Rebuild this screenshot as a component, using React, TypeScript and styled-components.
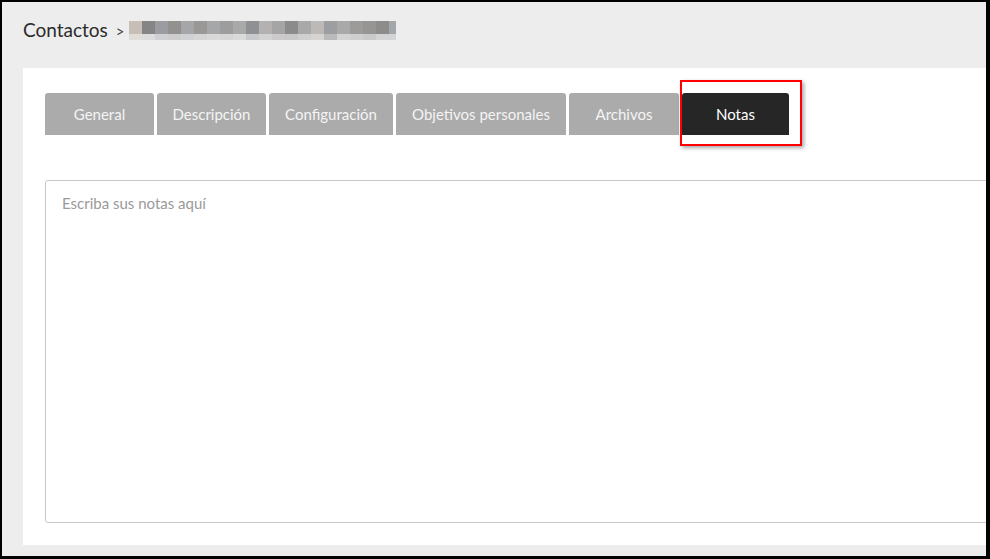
import React from 'react';
import styled, { createGlobalStyle } from "styled-components";

const GlobalStyle = createGlobalStyle`
  html, body {
    margin: 0;
    padding: 0;
    background: #ededed;
    font-family: Lato, "Open Sans", Arial, sans-serif;
  }
`;

const Frame = styled.div`
  box-sizing: border-box;
  width: 990px;
  height: 559px;
  border-style: solid;
  border-color: #000;
  border-width: 2px 4px 3px 2px;
  background: #ededed;
  overflow: hidden;
  display: flex;
  flex-direction: column;
`;

const Header = styled.div`
  height: 66px;
  display: flex;
  align-items: center;
  padding: 0 0 12px 21px;
  box-sizing: border-box;
`;

const Crumb = styled.span`
  font-size: 19px;
  color: #2b2b2b;
`;

const Chevron = styled.span`
  font-size: 15px;
  color: #444;
  margin: 4px 4px 0 8px;
`;

const Mosaic = styled.div`
  display: grid;
  grid-template-columns: repeat(20, 13px) 7px;
  grid-template-rows: 13px 6px;
  margin-top: 3px;
`;

const Cell = styled.div<{ $c: string }>`
  background: ${p => p.$c};
`;

const Panel = styled.div`
  flex: 1;
  margin: 0 0 11px 21px;
  background: #fff;
  padding: 25px 0 0 22px;
  overflow: hidden;
`;

const TabRow = styled.div`
  display: flex;
  gap: 3px;
`;

const Tab = styled.div<{ $w: number; $active?: boolean }>`
  position: relative;
  width: ${p => p.$w}px;
  height: 42px;
  border-radius: 3px 3px 0 0;
  background: ${p => (p.$active ? "#262626" : "#ababab")};
  color: ${p => (p.$active ? "#fff" : "#f4f4f4")};
  font-size: 15px;
  display: flex;
  align-items: center;
  justify-content: center;
`;

const Highlight = styled.div`
  position: absolute;
  left: -2px;
  top: -13px;
  right: -13px;
  bottom: -11px;
  border: 2px solid #f00;
  box-shadow: 2px 2px 4px rgba(0, 0, 0, 0.35);
  pointer-events: none;
`;

const Notes = styled.textarea`
  display: block;
  box-sizing: border-box;
  margin-top: 45px;
  width: 1000px;
  height: 343px;
  border: 1px solid #c8c8c8;
  border-radius: 3px;
  padding: 13px 16px;
  font-family: Lato, "Open Sans", Arial, sans-serif;
  font-size: 15px;
  resize: none;
  outline: none;
  &::placeholder {
    color: #9a9a9a;
  }
`;

const topRow = [
  "#c8beb8", "#858585", "#9a9ca2", "#939190", "#a5a6a9", "#9a9897", "#a6a7a9",
  "#9d9d9d", "#a9a9a9", "#8f9094", "#b3b2b0", "#a5a5a5", "#8b8b8b", "#a9a9a9",
  "#bcb9b6", "#9c9ea2", "#a9a9a9", "#9d9b9a", "#959595", "#8d8c8a", "#a3a6aa",
];
const bottomRow = [
  "#e0ddd9", "#dcdcdc", "#cfd0d2", "#cdcdcd", "#d0d1d3", "#d5d5d5", "#d9d9d9",
  "#d6d6d6", "#dadada", "#c8c9cb", "#d2d2d2", "#cccaca", "#c9c9c9", "#cfcfcf",
  "#d6d4d2", "#b9bab9", "#d3d3d3", "#cfcfcf", "#cacaca", "#d4d4d4", "#d3d4d6",
];

const tabs = [
  { label: "General", w: 109 },
  { label: "Descripción", w: 109 },
  { label: "Configuración", w: 124 },
  { label: "Objetivos personales", w: 170 },
  { label: "Archivos", w: 110 },
  { label: "Notas", w: 107, active: true },
];

function App() {
  return (
    <Frame>
      <GlobalStyle />
      <Header>
        <Crumb>Contactos</Crumb>
        <Chevron>&gt;</Chevron>
        <Mosaic>
          {topRow.map((c, i) => <Cell key={"t" + i} $c={c} />)}
          {bottomRow.map((c, i) => <Cell key={"b" + i} $c={c} />)}
        </Mosaic>
      </Header>
      <Panel>
        <TabRow>
          {tabs.map(t => (
            <Tab key={t.label} $w={t.w} $active={t.active}>
              {t.label}
              {t.active && <Highlight />}
            </Tab>
          ))}
        </TabRow>
        <Notes placeholder="Escriba sus notas aquí" />
      </Panel>
    </Frame>
  );
}

export default App;
